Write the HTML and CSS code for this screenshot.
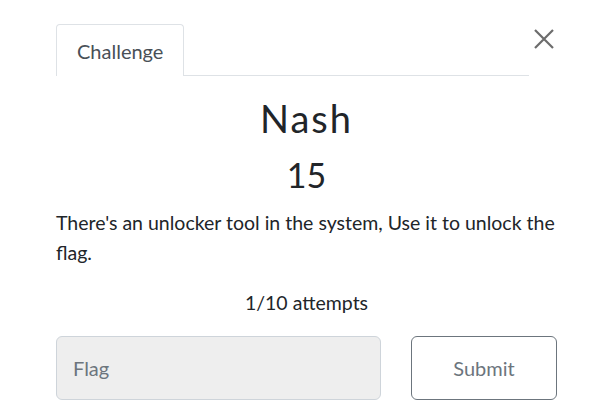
FILE: index.html
```html
<!DOCTYPE html>
<html>
<head>
<meta charset="utf-8">
<link rel="stylesheet" href="styles.css">
</head>
<body>
<div class="modal">
  <div class="head">
    <ul class="tabs">
      <li class="tab">Challenge</li>
    </ul>
    <button class="close" aria-label="Close">
      <svg width="20" height="20" viewBox="0 0 20 20"><path d="M1 1L19 19M19 1L1 19" stroke="#6c6c6c" stroke-width="2.2" fill="none"/></svg>
    </button>
  </div>
  <h2 class="title">Nash</h2>
  <h3 class="value">15</h3>
  <p class="desc">There's an unlocker tool in the system, Use it to unlock the flag.</p>
  <p class="attempts">1/10 attempts</p>
  <form class="submit-row">
    <input class="flag" type="text" placeholder="Flag">
    <button class="submit" type="button">Submit</button>
  </form>
</div>
</body>
</html>
```

FILE: styles.css
```css
html, body {
  margin: 0;
  padding: 0;
  background: #fff;
}
body {
  font-family: Lato, "Open Sans", sans-serif;
  color: #212529;
}
.modal {
  width: 501px;
  padding: 24px 0 0 56px;
}
.head {
  display: flex;
  align-items: flex-start;
}
.tabs {
  list-style: none;
  margin: 0;
  padding: 0;
  flex: 0 0 473px;
  display: flex;
  border-bottom: 1px solid #dee2e6;
}
.tab {
  box-sizing: border-box;
  padding: 0 20px;
  display: flex;
  align-items: center;
  font-size: 20px;
  color: #495057;
  border: 1px solid #dee2e6;
  border-bottom: none;
  border-radius: 4px 4px 0 0;
  margin-bottom: -1px;
  background: #fff;
  height: 52px;
}
.close {
  margin: 5px 0 0 5px;
  padding: 0;
  border: none;
  background: none;
  width: 20px;
  height: 20px;
  display: flex;
}
.title {
  margin: 19px 0 0;
  text-align: center;
  font-weight: 400;
  font-size: 38px;
  letter-spacing: 2px;
  line-height: 46px;
}
.value {
  margin: 14px 0 0;
  text-align: center;
  font-weight: 400;
  font-size: 34px;
  line-height: 40px;
}
.desc {
  margin: 13px 0 0;
  font-size: 19.5px;
  line-height: 30px;
}
.attempts {
  margin: 20px 0 0;
  text-align: center;
  font-size: 19.5px;
  line-height: 30px;
}
.submit-row {
  margin: 18px 0 0;
  display: flex;
  gap: 30px;
}
.flag {
  width: 325px;
  height: 64px;
  box-sizing: border-box;
  border: 1px solid #ced4da;
  border-radius: 6px;
  background: #eeeeee;
  padding: 0 16px;
  font-family: Lato, sans-serif;
  font-size: 20px;
  color: #495057;
}
.flag::placeholder {
  color: #6c757d;
}
.submit {
  width: 146px;
  height: 64px;
  box-sizing: border-box;
  border: 1px solid #6c757d;
  border-radius: 6px;
  background: #fff;
  font-family: Lato, sans-serif;
  font-size: 20px;
  color: #6c757d;
}
```
